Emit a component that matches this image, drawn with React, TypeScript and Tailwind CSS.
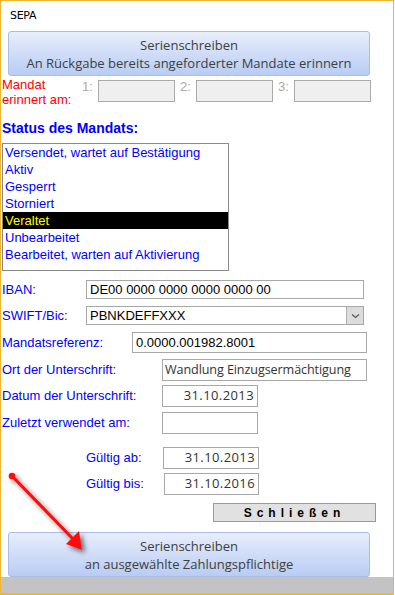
import React from "react";

const statusItems = [
  "Versendet, wartet auf Bestätigung",
  "Aktiv",
  "Gesperrt",
  "Storniert",
  "Veraltet",
  "Unbearbeitet",
  "Bearbeitet, warten auf Aktivierung",
];

function BlueButton({ line1, line2 }: { line1: string; line2: string }) {
  return (
    <div className="ml-[7px] w-[362px] h-[45px] shrink-0 rounded-[3px] border border-[#a9bde6] bg-gradient-to-b from-[#e8eefb] to-[#b8ccf4] flex flex-col items-center justify-center text-[13px] leading-[18px] text-[#404040] font-['Open_Sans',sans-serif]">
      <span>{line1}</span>
      <span>{line2}</span>
    </div>
  );
}

function Field({ value, className, align = "left", seg = false }: { value?: string; className: string; align?: "left" | "right"; seg?: boolean }) {
  return (
    <div
      className={`h-full border border-[#a8a8a8] bg-white flex items-center px-[3px] text-[13px] overflow-hidden whitespace-nowrap ${
        align === "right" ? "justify-end" : "justify-start"
      } ${seg ? "font-['Open_Sans',sans-serif] text-[#333]" : "text-black"} ${className}`}
    >
      {value}
    </div>
  );
}

export default function App() {
  return (
    <div className="relative w-[394px] h-[595px] bg-white border-l border-t border-r border-b-2 border-[#f2b52e] flex flex-col overflow-hidden font-['Liberation_Sans',Arial,sans-serif]">
      {/* Title */}
      <div className="ml-[9px] mt-[8px] h-[14px] text-[11px] leading-[14px] text-black font-['DejaVu_Sans',sans-serif] tracking-[-0.3px]">SEPA</div>

      <div className="mt-[8px]">
        <BlueButton line1="Serienschreiben" line2="An Rückgabe bereits angeforderter Mandate erinnern" />
      </div>

      {/* Mandat erinnert am */}
      <div className="flex h-[30px] mt-[1px] shrink-0">
        <div className="w-[80px] text-[13px] leading-[15px] text-[#ff0000] pl-[1px]">
          Mandat
          <br />
          erinnert am:
        </div>
        {["1:", "2:", "3:"].map((n) => (
          <div key={n} className="flex items-start">
            <span className="w-[17px] text-[13px] leading-[15px] text-[#aaaaaa] pt-[2px] pl-[1px]">{n}</span>
            <div className="mt-[3px] w-[77px] h-[22px] border border-[#aaaaaa] bg-[#efefef] mr-[4px]" />
          </div>
        ))}
      </div>

      {/* Status */}
      <div className="mt-[13px] ml-[1px] h-[17px] text-[14px] leading-[17px] font-bold text-[#0000ff]">Status des Mandats:</div>
      <div className="ml-[1px] mt-[6px] w-[227px] h-[128px] border border-[#8a8a8a] bg-white shrink-0">
        {statusItems.map((s) => (
          <div
            key={s}
            className={`h-[17px] leading-[17px] text-[13px] pl-[2px] ${
              s === "Veraltet" ? "bg-black text-[#ffff00]" : "text-[#0000ff]"
            }`}
          >
            {s}
          </div>
        ))}
      </div>

      {/* IBAN */}
      <div className="flex items-center h-[19px] mt-[9px] shrink-0">
        <span className="w-[85px] pl-[1px] text-[13px] text-[#0000ff]">IBAN:</span>
        <Field value="DE00 0000 0000 0000 0000 00" className="w-[278px]" />
      </div>

      {/* SWIFT */}
      <div className="flex items-center h-[19px] mt-[7px] shrink-0">
        <span className="w-[85px] pl-[1px] text-[13px] text-[#0000ff]">SWIFT/Bic:</span>
        <div className="flex h-full w-[278px] border border-[#a8a8a8]">
          <div className="flex-1 flex items-center px-[3px] text-[13px] text-black">PBNKDEFFXXX</div>
          <div className="w-[17px] h-full bg-[#dcdcdc] border-l border-[#b0b0b0] flex items-center justify-center">
            <svg width="9" height="6" viewBox="0 0 9 6">
              <path d="M1 1.5 L4.5 4.5 L8 1.5" fill="none" stroke="#555" strokeWidth="1.2" />
            </svg>
          </div>
        </div>
      </div>

      {/* Mandatsreferenz */}
      <div className="flex items-center h-[21px] mt-[7px] shrink-0">
        <span className="w-[131px] pl-[1px] text-[13px] text-[#0000ff]">Mandatsreferenz:</span>
        <Field value="0.0000.001982.8001" className="w-[235px] text-[#222]" />
      </div>

      {/* Ort */}
      <div className="flex items-center h-[22px] mt-[6px] shrink-0">
        <span className="w-[161px] pl-[1px] text-[13px] text-[#0000ff]">Ort der Unterschrift:</span>
        <div className="h-full w-[205px] border border-[#a8a8a8] bg-white flex items-center pl-[2px] text-[12.6px] tracking-[-0.1px] whitespace-nowrap overflow-hidden font-['Open_Sans',sans-serif] text-[#333]">
          Wandlung Einzugsermächtigung
        </div>
      </div>

      {/* Datum */}
      <div className="flex items-center h-[22px] mt-[4px] shrink-0">
        <span className="w-[161px] pl-[1px] text-[13px] text-[#0000ff]">Datum der Unterschrift:</span>
        <Field value="31.10.2013" className="w-[96px] tracking-[0.4px]" align="right" seg />
      </div>

      {/* Zuletzt */}
      <div className="flex items-center h-[22px] mt-[5px] shrink-0">
        <span className="w-[161px] pl-[1px] text-[13px] text-[#0000ff]">Zuletzt verwendet am:</span>
        <Field className="w-[96px]" />
      </div>

      {/* Gültig ab */}
      <div className="flex items-center h-[22px] mt-[13px] shrink-0">
        <span className="w-[162px] pl-[85px] text-[13px] text-[#0000ff]">Gültig ab:</span>
        <Field value="31.10.2013" className="w-[96px] tracking-[0.4px]" align="right" seg />
      </div>

      {/* Gültig bis */}
      <div className="flex items-center h-[22px] mt-[4px] shrink-0">
        <span className="w-[163px] pl-[85px] text-[13px] text-[#0000ff]">Gültig bis:</span>
        <Field value="31.10.2016" className="w-[95px] tracking-[0.4px]" align="right" seg />
      </div>

      {/* Schließen */}
      <div className="flex mt-[8px] h-[19px] shrink-0">
        <div className="ml-[212px] w-[163px] h-full border border-[#9a9a9a] bg-[#e1e1e1] flex items-center justify-center text-[12px] font-bold tracking-[5px] text-black">
          Schließen
        </div>
      </div>

      {/* Bottom button */}
      <div className="mt-[10px] h-[45px] overflow-hidden shrink-0">
        <BlueButton line1="Serienschreiben" line2="an ausgewählte Zahlungspflichtige" />
      </div>
      <div className="flex-1 bg-[#c3c3c6]" />

      {/* Red arrow annotation */}
      <svg className="absolute left-0 top-0 pointer-events-none" width="394" height="595" viewBox="-1 -1 394 595">
        <defs>
          <filter id="sh" x="-50%" y="-50%" width="200%" height="200%">
            <feGaussianBlur in="SourceAlpha" stdDeviation="2.5" />
            <feOffset dx="3" dy="3" result="b" />
            <feComponentTransfer>
              <feFuncA type="linear" slope="0.55" />
            </feComponentTransfer>
            <feMerge>
              <feMergeNode />
              <feMergeNode in="SourceGraphic" />
            </feMerge>
          </filter>
        </defs>
        <g filter="url(#sh)">
          <line x1="10" y1="474" x2="72" y2="538" stroke="#ff1010" strokeWidth="3.2" strokeLinecap="round" />
          <circle cx="10" cy="474" r="3.3" fill="#ff1010" />
          <polygon points="80,548 64,542 77,529" fill="#ff1010" />
        </g>
      </svg>
    </div>
  );
}
